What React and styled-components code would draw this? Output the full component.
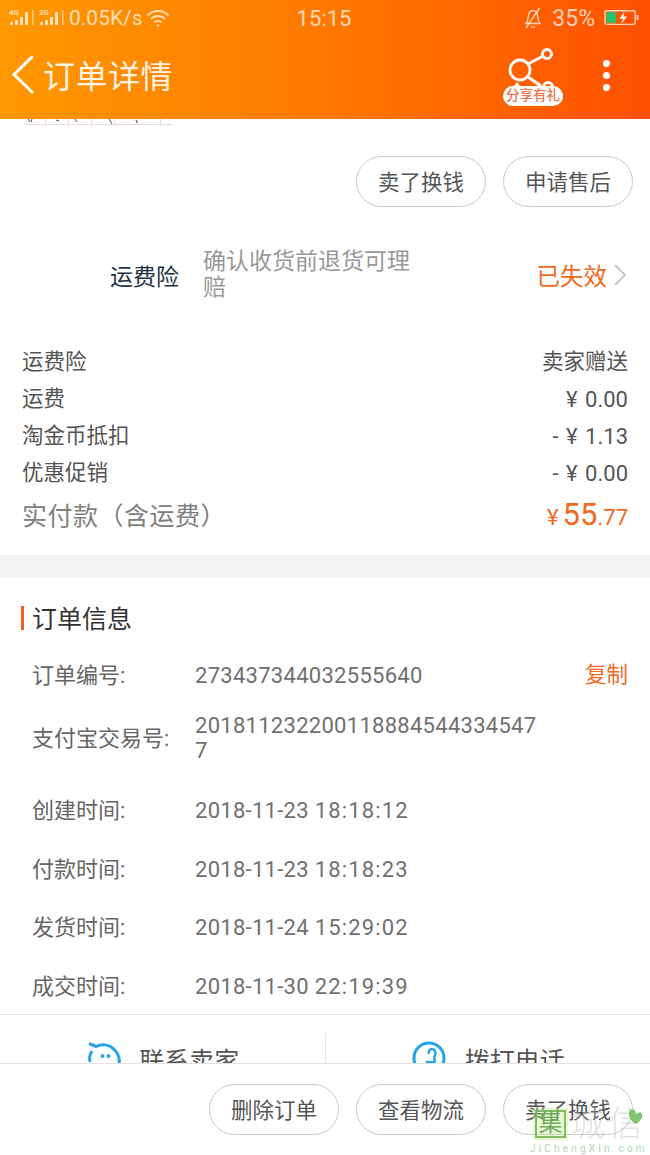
import React from 'react';
import styled, { createGlobalStyle } from 'styled-components';

const GlobalStyle = createGlobalStyle`
  html, body {
    margin: 0;
    padding: 0;
    background: #fff;
    font-family: Roboto, "Noto Sans CJK SC", sans-serif;
  }
  * { box-sizing: border-box; }
`;

const Page = styled.div`
  position: relative;
  width: 650px;
  height: 1155px;
  display: flex;
  flex-direction: column;
  overflow: hidden;
  background: #fff;
`;

const Header = styled.header`
  height: 119px;
  flex: none;
  color: #fff;
  background: linear-gradient(90deg, #ff9800 0%, #ff7c00 45%, #ff5000 100%);
`;

const StatusBar = styled.div`
  height: 36px;
  padding: 0 11px 0 9px;
  display: grid;
  grid-template-columns: 1fr auto 1fr;
  align-items: center;
  font-size: 22px;
  color: rgba(255, 255, 255, 0.72);
`;

const StatusSide = styled.div`
  display: flex;
  align-items: center;
  gap: ${props => props.gap || 3}px;
  justify-content: ${props => (props.end ? 'flex-end' : 'flex-start')};
`;

const NetSpeed = styled.span`
  font-size: 21px;
`;

const BatteryLevel = styled.span`
  font-size: 23px;
`;

const NavBar = styled.div`
  height: 83px;
  padding: 0 40px 0 11px;
  display: flex;
  align-items: center;
`;

const Back = styled.div`
  display: flex;
  margin-bottom: 6px;
`;

const NavTitle = styled.div`
  margin-left: 8px;
  margin-bottom: 7px;
  font-size: 32px;
  letter-spacing: 0.5px;
  flex: 1;
  color: rgba(255, 255, 255, 0.92);
`;

const ShareBox = styled.div`
  position: relative;
  width: 64px;
  height: 60px;
  margin-right: 38px;
  margin-bottom: 3px;
`;

const ShareBadge = styled.div`
  position: absolute;
  left: 2px;
  bottom: 0;
  width: 60px;
  height: 20px;
  border-radius: 10px;
  background: #fff;
  color: #e9734a;
  font-size: 13.500px;
  font-weight: 500;
  line-height: 19px;
  text-align: center;
  white-space: nowrap;
`;

const Dots = styled.div`
  display: flex;
  flex-direction: column;
  gap: 5px;
  margin-bottom: 4px;
`;

const Dot = styled.span`
  width: 7px;
  height: 7px;
  border-radius: 50%;
  background: #fff;
`;

const Main = styled.main`
  flex: 1;
  min-height: 0;
  overflow: hidden;
`;

const ThumbSliver = styled.div`
  height: 6px;
  width: 150px;
  margin-left: 23px;
  display: flex;
`;

const ActionRow = styled.div`
  display: flex;
  justify-content: flex-end;
  gap: 17px;
  padding: ${props => props.pad || '31px 17px 0 0'};
`;

const Pill = styled.div`
  width: 130px;
  height: 51px;
  padding-bottom: 2px;
  border: 1px solid #c9c9c9;
  border-radius: 26px;
  display: flex;
  align-items: center;
  justify-content: center;
  font-size: 21.500px;
  color: #555;
  background: #fff;
`;

const Insurance = styled.div`
  margin-top: 42px;
  height: 54px;
  padding: 0 23px 3px 110px;
  display: flex;
  align-items: center;
`;

const InsuranceName = styled.div`
  width: 93px;
  flex: none;
  font-size: 23px;
  color: #1e3246;
`;

const InsuranceDesc = styled.div`
  width: 222px;
  flex: none;
  font-size: 23px;
  line-height: 26px;
  color: #999;
`;

const InsuranceStatus = styled.div`
  margin-left: auto;
  display: flex;
  align-items: center;
  gap: 5px;
  font-size: 23.500px;
  color: #f2691e;
`;

const Costs = styled.section`
  margin-top: 38px;
  padding: 0 22px;
`;

const CostRow = styled.div`
  height: 37px;
  display: flex;
  align-items: center;
  justify-content: space-between;
  font-size: 21.500px;
  color: #555;
`;

const Amount = styled.span`
  padding-top: ${props => (props.numeric ? 6 : 0)}px;
  font-size: ${props => (props.numeric ? 22 : 21.5)}px;
  word-spacing: 2px;
`;

const TotalRow = styled.div`
  height: 46px;
  margin-top: 2px;
  display: flex;
  align-items: center;
  justify-content: space-between;
  font-size: 25px;
  letter-spacing: 0.5px;
  color: #808080;
`;

const Price = styled.div`
  display: flex;
  align-items: baseline;
  letter-spacing: 0;
  color: #f2691e;
`;

const PriceSign = styled.span`
  font-size: 22px;
  margin-right: 4px;
`;

const PriceBig = styled.span`
  font-size: 31px;
`;

const PriceSmall = styled.span`
  font-size: 22px;
`;

const Band = styled.div`
  height: 23px;
  margin-top: 18px;
  background: #f2f2f2;
`;

const SectionTitle = styled.h2`
  margin: 28px 0 0 21px;
  height: 24px;
  padding: 0 0 2px 8px;
  display: flex;
  align-items: center;
  border-left: 3px solid #f2601e;
  font-size: 25px;
  font-weight: 400;
  color: #333;
`;

const InfoList = styled.div`
  margin-top: 19px;
  padding: 0 22px 0 32px;
`;

const InfoRow = styled.div`
  display: flex;
  align-items: center;
  height: ${props => props.h}px;
`;

const InfoLabel = styled.div`
  width: 163px;
  flex: none;
  font-size: 22px;
  color: #666;
`;

const InfoValue = styled.div`
  width: 348px;
  flex: none;
  padding-top: 5px;
  font-size: 22px;
  line-height: 25px;
  letter-spacing: 0.28px;
  color: #707070;
  word-break: break-all;
`;

const TimePart = styled.span`
  letter-spacing: 1.150px;
`;

const CopyLink = styled.div`
  margin-left: auto;
  font-size: 21.500px;
  color: #f2691e;
`;

const ContactRow = styled.div`
  margin-top: 2px;
  height: 80px;
  border-top: 1px solid #e6e6e6;
  display: flex;
  padding-top: 18px;
`;

const ContactCell = styled.div`
  flex: 1;
  height: 60px;
  display: flex;
  justify-content: center;
  gap: 18px;
  padding-top: 8px;
  font-size: 25px;
  color: #555;
  border-left: ${props => (props.divided ? '1px solid #e6e6e6' : 'none')};
`;

const Footer = styled.footer`
  height: 92px;
  flex: none;
  border-top: 1px solid #e2e2e2;
  background: #fff;
`;

const Watermark = styled.div`
  position: absolute;
  left: 530px;
  top: 1104px;
  width: 120px;
  height: 51px;
  pointer-events: none;
`;

const MarkBox = styled.div`
  position: absolute;
  left: 5px;
  top: 6px;
  width: 31px;
  height: 28px;
  border: 2px solid rgba(115, 175, 85, 0.85);
  box-shadow: 0 0 0 2px rgba(190, 235, 140, 0.4);
  background: rgba(190, 235, 140, 0.35);
  color: #6fae56;
  font-size: 24px;
  line-height: 23px;
  text-align: center;
`;

const MarkName = styled.div`
  position: absolute;
  left: 40px;
  top: 0;
  font-size: 35px;
  line-height: 42px;
  letter-spacing: 3px;
  white-space: nowrap;
  font-weight: 300;
  color: rgba(190, 190, 190, 0.45);
`;

const MarkHeart = styled.div`
  position: absolute;
  left: 97px;
  top: 4px;
  display: flex;
`;

const MarkUrl = styled.div`
  position: absolute;
  left: 0;
  bottom: 0;
  font-size: 10px;
  line-height: 12px;
  letter-spacing: 3.200px;
  white-space: nowrap;
  color: #b2d6ae;
`;

const Signal = ({ label }) => (
  <svg width="27" height="22" viewBox="0 0 27 22" fill="currentColor">
    <text x="0" y="8" fontSize="8" fontWeight="700" fontFamily="Roboto, sans-serif">{label}</text>
    <rect x="1" y="15" width="3" height="3" />
    <rect x="6" y="13" width="3" height="5" />
    <rect x="11" y="10" width="3" height="8" />
    <rect x="16" y="5" width="3" height="13" />
    <rect x="23" y="3" width="1.600" height="15" opacity="0.7" />
  </svg>
);

const Wifi = () => (
  <svg width="24" height="20" viewBox="0 0 24 20" fill="none" stroke="currentColor" strokeWidth="1.800">
    <path d="M1.500 7.500C7.500 1.500 16.500 1.500 22.500 7.500" />
    <path d="M5 11c4-4 10-4 14 0" />
    <path d="M8.500 14.500c2-2 5-2 7 0" />
    <circle cx="12" cy="17.500" r="1.200" fill="currentColor" stroke="none" />
  </svg>
);

const MutedBell = () => (
  <svg width="20" height="22" viewBox="0 0 20 22" fill="none" stroke="currentColor" strokeWidth="1.400">
    <path d="M3 16.500c1.500-1.500 2-3 2.200-6C5.400 6 7 3.500 10 3.500s4.600 2.500 4.800 7c.2 3 .7 4.500 2.200 6z" />
    <path d="M8 19.500c1 1 3 1 4 0" />
    <path d="M16.500 1L3 21" />
  </svg>
);

const Battery = () => (
  <svg width="35" height="18" viewBox="0 0 36 18">
    <rect x="1" y="1.500" width="31" height="14" rx="1.500" fill="none" stroke="rgba(255,255,255,0.75)" strokeWidth="1.400" />
    <rect x="2.500" y="3" width="10" height="11" fill="#27c46b" />
    <rect x="33.500" y="6" width="2" height="5" fill="rgba(255,255,255,0.75)" />
    <path d="M21 2.500l-5 7h3.500l-1.500 5.500 5.500-7.500H20z" fill="#fff" />
  </svg>
);

const BackArrow = () => (
  <svg width="24" height="40" viewBox="0 0 24 40" fill="none" stroke="#fff" strokeWidth="3" strokeLinecap="round">
    <path d="M21 2L3 19.500 21 37" />
  </svg>
);

const ShareIcon = () => (
  <svg width="64" height="48" viewBox="0 0 64 48" fill="none" stroke="#fff" strokeWidth="2.800">
    <circle cx="19" cy="24" r="10" />
    <circle cx="46" cy="8" r="4.500" />
    <circle cx="47" cy="41" r="4.500" />
    <path d="M27 18l15-8M27 31l13 9" />
    <path d="M13 40l3-4 3 4z" fill="#fff" stroke="none" />
  </svg>
);

const Chevron = () => (
  <svg width="15" height="24" viewBox="0 0 15 24" fill="none" stroke="#c8c8c8" strokeWidth="2">
    <path d="M3 2l10 10L3 22" />
  </svg>
);

const ChatIcon = () => (
  <svg width="36" height="36" viewBox="-2 0 36 36" fill="none" stroke="#27a4e6" strokeWidth="3">
    <path d="M2 2.500l7 3c6-3 13-2 17 2 5 4 7 10 6 16" />
    <path d="M3 21c-1-4 0-8 2-11" />
    <circle cx="15.500" cy="15" r="2" fill="#27a4e6" stroke="none" />
    <circle cx="21.500" cy="15" r="2" fill="#27a4e6" stroke="none" />
  </svg>
);

const PhoneIcon = () => (
  <svg width="36" height="36" viewBox="0 0 36 36" fill="none" stroke="#27a4e6" strokeWidth="3">
    <circle cx="18" cy="17" r="15" />
    <path d="M18 13c-1-3 1-5 3-5 3 0 4 3 3 6-1 2-1 4 0 6 0 2-5 1-9 1" strokeWidth="2.500" />
  </svg>
);

const ThumbMarks = () => (
  <svg width="150" height="6" viewBox="0 0 150 6" fill="none">
    <path d="M0 5.500h150" stroke="#e8d8dc" />
    <path d="M22.500 0v6M45.500 0v6M68.500 0v6M91.500 0v6M114.500 0v6M137.500 0v6" stroke="#f0d5dc" />
    <path d="M5 0l2 3M9 0l-1 3M33 1l3 1M52 0l2 3M86 0l3 5M113 1l1 3" stroke="#555" />
  </svg>
);

const MarkHeartIcon = () => (
  <svg width="18" height="18" viewBox="0 0 18 18">
    <path d="M5 1c3 0 4 3 4 6 1-2 3-3 5-2 3 2 1 7-5 11C5 14 2 10 2 6c0-3 1-5 3-5z" fill="#7fc56e" />
  </svg>
);

const costs = [
  { name: '运费险', value: '卖家赠送' },
  { name: '运费', value: '¥ 0.00', numeric: true },
  { name: '淘金币抵扣', value: '- ¥ 1.13', numeric: true },
  { name: '优惠促销', value: '- ¥ 0.00', numeric: true },
];

const orderInfo = [
  { label: '订单编号:', value: '273437344032555640', h: 47, copy: true },
  { label: '支付宝交易号:', value: '2018112322001188845443345477', h: 79 },
  { label: '创建时间:', value: '2018-11-23 ', time: '18:18:12', h: 65 },
  { label: '付款时间:', value: '2018-11-23 ', time: '18:18:23', h: 54 },
  { label: '发货时间:', value: '2018-11-24 ', time: '15:29:02', h: 62 },
  { label: '成交时间:', value: '2018-11-30 ', time: '22:19:39', h: 56 },
];

const App = () => (
  <Page>
    <GlobalStyle />
    <Header>
      <StatusBar>
        <StatusSide>
          <Signal label="4G" />
          <Signal label="2G" />
          <NetSpeed>0.05K/s</NetSpeed>
          <Wifi />
        </StatusSide>
        <span>15:15</span>
        <StatusSide end gap={9}>
          <MutedBell />
          <BatteryLevel>35%</BatteryLevel>
          <Battery />
        </StatusSide>
      </StatusBar>
      <NavBar>
        <Back>
          <BackArrow />
        </Back>
        <NavTitle>订单详情</NavTitle>
        <ShareBox>
          <ShareIcon />
          <ShareBadge>分享有礼</ShareBadge>
        </ShareBox>
        <Dots>
          <Dot />
          <Dot />
          <Dot />
        </Dots>
      </NavBar>
    </Header>

    <Main>
      <ThumbSliver>
        <ThumbMarks />
      </ThumbSliver>
      <ActionRow>
        <Pill>卖了换钱</Pill>
        <Pill>申请售后</Pill>
      </ActionRow>

      <Insurance>
        <InsuranceName>运费险</InsuranceName>
        <InsuranceDesc>确认收货前退货可理赔</InsuranceDesc>
        <InsuranceStatus>
          已失效
          <Chevron />
        </InsuranceStatus>
      </Insurance>

      <Costs>
        {costs.map(item => (
          <CostRow key={item.name}>
            <span>{item.name}</span>
            <Amount numeric={item.numeric}>{item.value}</Amount>
          </CostRow>
        ))}
        <TotalRow>
          <span>实付款（含运费）</span>
          <Price>
            <PriceSign>¥</PriceSign>
            <PriceBig>55</PriceBig>
            <PriceSmall>.77</PriceSmall>
          </Price>
        </TotalRow>
      </Costs>

      <Band />

      <SectionTitle>订单信息</SectionTitle>
      <InfoList>
        {orderInfo.map(item => (
          <InfoRow key={item.label} h={item.h}>
            <InfoLabel>{item.label}</InfoLabel>
            <InfoValue>
              {item.value}
              {item.time && <TimePart>{item.time}</TimePart>}
            </InfoValue>
            {item.copy && <CopyLink>复制</CopyLink>}
          </InfoRow>
        ))}
      </InfoList>

      <ContactRow>
        <ContactCell>
          <ChatIcon />
          联系卖家
        </ContactCell>
        <ContactCell divided>
          <PhoneIcon />
          拨打电话
        </ContactCell>
      </ContactRow>
    </Main>

    <Footer>
      <ActionRow pad="20px 17px 0 0">
        <Pill>删除订单</Pill>
        <Pill>查看物流</Pill>
        <Pill>卖了换钱</Pill>
      </ActionRow>
    </Footer>

    <Watermark>
      <MarkBox>集</MarkBox>
      <MarkName>城信</MarkName>
      <MarkHeart>
        <MarkHeartIcon />
      </MarkHeart>
      <MarkUrl>JiChengXin.com</MarkUrl>
    </Watermark>
  </Page>
);

export default App;
